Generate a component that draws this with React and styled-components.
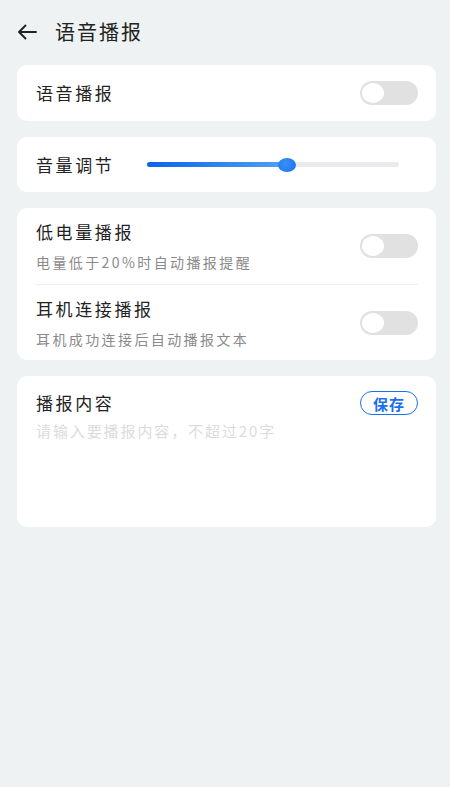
import styled, { createGlobalStyle } from "styled-components";

const GlobalStyle = createGlobalStyle`
  html, body {
    margin: 0;
    padding: 0;
    background: #eff2f3;
  }
  body {
    font-family: "Noto Sans CJK SC", "Noto Sans", sans-serif;
    color: #222;
  }
`;

function App() {
  const volume = 0.555;

  return (
    <Page>
      <GlobalStyle />
      <Header>
        <BackBtn>
          <svg width="20" height="16" viewBox="0 0 20 16" fill="none">
            <path
              d="M19 8H2M8.5 1.5L2 8l6.5 6.5"
              stroke="#222"
              strokeWidth="1.9"
              strokeLinecap="round"
              strokeLinejoin="round"
            />
          </svg>
        </BackBtn>
        <HeaderTitle>语音播报</HeaderTitle>
      </Header>

      <Card>
        <SimpleRow $h={56}>
          <Title>语音播报</Title>
          <Toggle />
        </SimpleRow>
      </Card>

      <Card>
        <SimpleRow $h={55}>
          <Title>音量调节</Title>
          <Slider>
            <SliderFill style={{ width: `${volume * 100}%` }} />
            <SliderThumb style={{ left: `${volume * 100}%` }} />
          </Slider>
        </SimpleRow>
      </Card>

      <Card>
        <OptionRow>
          <OptionText>
            <Title>低电量播报</Title>
            <Sub>电量低于20%时自动播报提醒</Sub>
          </OptionText>
          <Toggle />
        </OptionRow>
        <Divider />
        <OptionRow $last>
          <OptionText>
            <Title>耳机连接播报</Title>
            <Sub>耳机成功连接后自动播报文本</Sub>
          </OptionText>
          <Toggle />
        </OptionRow>
      </Card>

      <ContentCard>
        <ContentHead>
          <Title>播报内容</Title>
          <SaveBtn>保存</SaveBtn>
        </ContentHead>
        <Placeholder>请输入要播报内容，不超过20字</Placeholder>
      </ContentCard>
    </Page>
  );
}

function Toggle() {
  return (
    <Track>
      <Knob />
    </Track>
  );
}

const Page = styled.div`
  min-height: 787px;
  padding: 0 14px 0 17px;
  display: flex;
  flex-direction: column;
  gap: 16px;
  box-sizing: border-box;
`;

const Header = styled.div`
  height: 49px;
  padding-top: 15px;
  box-sizing: border-box;
  display: flex;
  align-items: center;
  gap: 18px;
`;

const BackBtn = styled.div`
  width: 20px;
  height: 24px;
  display: flex;
  align-items: center;
`;

const HeaderTitle = styled.div`
  font-size: 20px;
  line-height: 28px;
  letter-spacing: 2px;
  color: #222;
`;

const Card = styled.div`
  background: #fff;
  border-radius: 10px;
`;

const SimpleRow = styled.div`
  height: ${(p) => p.$h}px;
  padding: 0 18px 0 19px;
  display: flex;
  align-items: center;
  justify-content: space-between;
`;

const Title = styled.div`
  font-size: 17px;
  line-height: 24px;
  letter-spacing: 2.6px;
  color: #222;
`;

const Sub = styled.div`
  margin-top: 8px;
  font-size: 14px;
  line-height: 20px;
  letter-spacing: 2.4px;
  color: #8a8a8a;
`;

const Track = styled.div`
  width: 58px;
  height: 24px;
  border-radius: 12px;
  background: #e1e1e1;
  padding: 2px;
  box-sizing: border-box;
  flex-shrink: 0;
`;

const Knob = styled.div`
  width: 22px;
  height: 20px;
  border-radius: 50%;
  background: #fff;
`;

const Slider = styled.div`
  position: relative;
  width: 252px;
  height: 5px;
  border-radius: 3px;
  background: #e9eaee;
  margin-right: 19px;
`;

const SliderFill = styled.div`
  height: 100%;
  border-radius: 3px;
  background: linear-gradient(90deg, #0c63ea, #4fa2f6);
`;

const SliderThumb = styled.div`
  position: absolute;
  top: 50%;
  width: 18px;
  height: 14px;
  border-radius: 50%;
  transform: translate(-50%, -50%);
  background: radial-gradient(circle at 40% 40%, #3a90f6, #1670ee);
`;

const OptionRow = styled.div`
  padding: 12px 18px ${(p) => (p.$last ? "11px" : "12px")} 19px;
  display: flex;
  align-items: center;
  justify-content: space-between;
`;

const OptionText = styled.div`
  display: flex;
  flex-direction: column;
`;

const Divider = styled.div`
  height: 1px;
  background: #f0f0f0;
  margin: 0 18px 0 19px;
`;

const ContentCard = styled(Card)`
  height: 151px;
  padding: 15px 18px 0 19px;
  box-sizing: border-box;
`;

const ContentHead = styled.div`
  display: flex;
  align-items: center;
  justify-content: space-between;
`;

const SaveBtn = styled.button`
  width: 58px;
  height: 24px;
  border: 1.5px solid #1a6ff0;
  border-radius: 12px;
  background: #fff;
  color: #1a6ff0;
  font-family: "Noto Sans CJK SC", sans-serif;
  font-size: 15px;
  font-weight: 700;
  letter-spacing: 1px;
  padding: 0;
  display: flex;
  align-items: center;
  justify-content: center;
  box-sizing: border-box;
`;

const Placeholder = styled.div`
  margin-top: 6px;
  font-size: 15px;
  line-height: 20px;
  letter-spacing: 1.9px;
  color: #dcdcdc;
`;

export default App;
